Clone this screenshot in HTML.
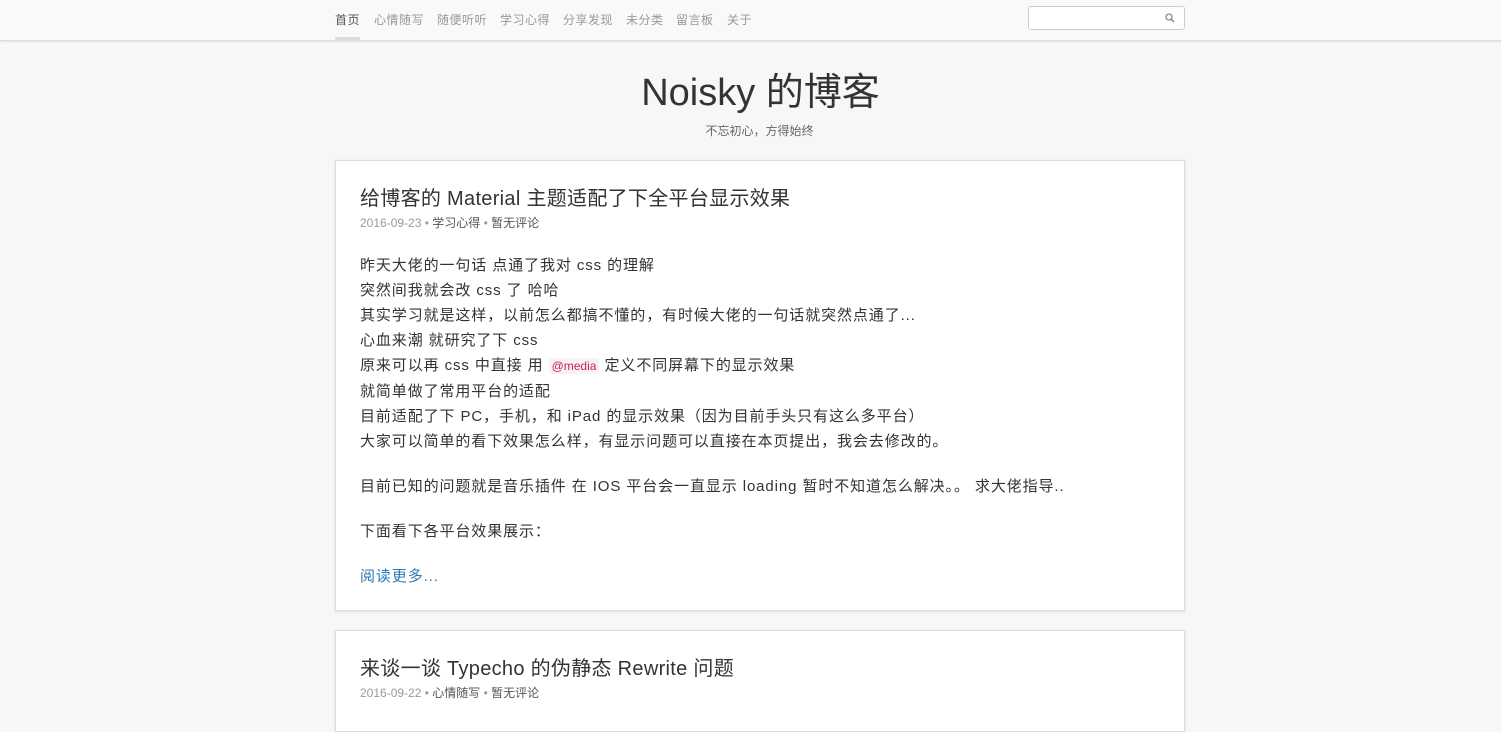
<!DOCTYPE html>
<html><head><meta charset="utf-8"><style>
body{margin:0;background:#f7f7f7;font-family:"Liberation Sans","Noto Sans CJK SC",sans-serif;color:#333;overflow:hidden}
.top{height:40px;background:#f9f9f9;border-bottom:1px solid #ddd;box-shadow:0 1px 2px rgba(0,0,0,.08);position:relative}
.nav{font-size:12px;color:#999;}
.nav span{position:absolute;top:0;line-height:40px;letter-spacing:0.5px}
.nav span.a{color:#555}
.nav span.a:after{content:"";position:absolute;left:0;right:0;bottom:0;height:3px;background:#ddd}
.search{position:absolute;left:1028px;top:6px;width:155px;height:22px;border:1px solid #ccc;border-radius:3px;background:#fff}
.search svg{position:absolute;right:9px;top:6px}
h1{text-align:center;font-weight:normal;font-size:38px;margin:29px 0 0;padding-left:20px;color:#333;line-height:46px}
.sub{text-align:center;font-size:12px;color:#666;margin-top:6px;padding-left:18px}
.card{position:absolute;left:335px;width:848px;background:#fff;border:1px solid #ddd;box-shadow:0 1px 3px rgba(0,0,0,.1)}
.card h2{font-weight:normal;font-size:20px;margin:0;position:absolute;left:24px;top:21px;color:#333;letter-spacing:0.3px}
.meta{position:absolute;left:24px;font-size:12px;color:#999}
.meta b{font-weight:normal;color:#555}
.body{position:absolute;left:24px;top:92px;font-size:15px;line-height:25px;color:#333;letter-spacing:0.9px;white-space:nowrap}
.body p{margin:0 0 20px}
code{font-size:12px;color:#c7254e;background:#f9f2f4;padding:1px 3px;border-radius:2px;font-family:"Liberation Sans",sans-serif;letter-spacing:0}
a{color:#2a7ab8;text-decoration:none}
</style></head><body>
<div class="top"><div class="nav"><span class="a" style="left:335px">首页</span><span style="left:374px">心情随写</span><span style="left:437px">随便听听</span><span style="left:500px">学习心得</span><span style="left:563px">分享发现</span><span style="left:626px">未分类</span><span style="left:676px">留言板</span><span style="left:727px">关于</span></div>
<div class="search"><svg width="10" height="10" viewBox="0 0 10 10"><circle cx="4" cy="4" r="3" fill="none" stroke="#888" stroke-width="1.3"/><path d="M6 6l3 3" stroke="#888" stroke-width="1.5"/></svg></div></div>
<h1>Noisky 的博客</h1>
<div class="sub">不忘初心，方得始终</div>
<div class="card" style="top:160px;height:449px">
<h2>给博客的 Material 主题适配了下全平台显示效果</h2>
<div class="meta" style="top:53px">2016-09-23 • <b>学习心得</b> • <b>暂无评论</b></div>
<div class="body">
<p>昨天大佬的一句话 点通了我对 css 的理解<br>突然间我就会改 css 了 哈哈<br>其实学习就是这样，以前怎么都搞不懂的，有时候大佬的一句话就突然点通了...<br>心血来潮 就研究了下 css<br>原来可以再 css 中直接 用 <code>@media</code> 定义不同屏幕下的显示效果<br>就简单做了常用平台的适配<br>目前适配了下 PC，手机，和 iPad 的显示效果（因为目前手头只有这么多平台）<br>大家可以简单的看下效果怎么样，有显示问题可以直接在本页提出，我会去修改的。</p>
<p>目前已知的问题就是音乐插件 在 IOS 平台会一直显示 loading 暂时不知道怎么解决。。 求大佬指导..</p>
<p>下面看下各平台效果展示：</p>
<p><a>阅读更多...</a></p>
</div></div>
<div class="card" style="top:630px;height:100px">
<h2>来谈一谈 Typecho 的伪静态 Rewrite 问题</h2>
<div class="meta" style="top:53px">2016-09-22 • <b>心情随写</b> • <b>暂无评论</b></div>
</div>
</body></html>
